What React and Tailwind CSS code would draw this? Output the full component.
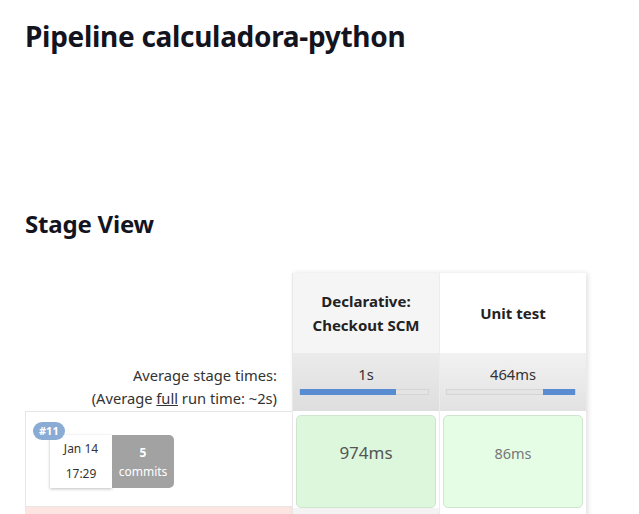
export default function App() {
  const font = { fontFamily: '"Noto Sans", "Open Sans", sans-serif' }
  return (
    <div className="min-h-screen bg-white text-[#14141f]" style={font}>
      <div className="pl-[25px] pt-[17px]">
        <h1 className="text-[28px] font-bold leading-[38px] tracking-[-0.3px]">Pipeline calculadora-python</h1>
        <h2 className="mt-[154px] text-[24px] font-bold leading-[30px] tracking-[-0.2px]">Stage View</h2>

        <div className="mt-[34px] flex">
          {/* left column */}
          <div className="w-[267px] shrink-0">
            <div className="h-[80px]" />
            <div className="flex h-[58px] flex-col items-end justify-center pr-[15px] pt-[9px] text-[14.7px] leading-[23px] text-[#333]">
              <div>Average stage times:</div>
              <div>
                (Average <span className="underline">full</span> run time: ~2s)
              </div>
            </div>
            <div className="relative h-[96px] border-y border-l border-[#e6e6e6] bg-white">
              <div className="absolute left-[7px] top-[10px] z-10 rounded-full bg-[#8aabd3] px-[6px] text-[11px] font-bold leading-[18px] text-white">
                #11
              </div>
              <div className="absolute left-[24px] top-[23px] flex h-[53px]">
                <div className="flex w-[62px] flex-col items-center justify-center gap-[9px] bg-white text-[12px] text-[#333] shadow-[0_1px_3px_rgba(0,0,0,0.25)]">
                  <div className="leading-[16px]">Jan 14</div>
                  <div className="leading-[16px]">17:29</div>
                </div>
                <div className="flex w-[62px] flex-col items-center justify-center rounded-r-[5px] bg-[#a2a2a2] text-[12px] text-white">
                  <div className="font-bold leading-[19px]">5</div>
                  <div className="leading-[19px]">commits</div>
                </div>
              </div>
            </div>
            <div className="h-[20px] bg-[#fde6e2]" />
          </div>

          {/* stage columns */}
          <div className="flex shadow-[2px_0_5px_rgba(0,0,0,0.12)]">
            {[
              { name: ['Declarative:', 'Checkout SCM'], head: 'bg-[#f5f5f5]', avg: '1s', avgBg: 'from-[#ebebeb] to-[#dedede]', fill: [0, 75], cell: '974ms', cellBg: 'bg-[#ddf7dd]', cellText: 'text-[17px] text-[#555]' },
              { name: ['Unit test'], head: 'bg-white', avg: '464ms', avgBg: 'from-[#f2f2f2] to-[#e2e2e2]', fill: [75, 25], cell: '86ms', cellBg: 'bg-[#e5fde5]', cellText: 'text-[14.5px] text-[#777]' },
            ].map((s, i) => (
              <div key={i} className={`w-[147px] ${i === 0 ? 'border-l border-[#e8e8e8]' : 'border-l border-[#ececec]'}`}>
                <div className={`flex h-[80px] flex-col items-center justify-center text-[15px] font-bold leading-[24px] text-[#222] ${s.head}`}>
                  {s.name.map((n) => (
                    <div key={n}>{n}</div>
                  ))}
                </div>
                <div className={`flex h-[58px] flex-col items-center bg-gradient-to-b pt-[12px] ${s.avgBg}`}>
                  <div className="text-[14.7px] leading-[18px] text-[#333]">{s.avg}</div>
                  <div className="relative ml-[6px] mt-[6px] h-[6px] w-[130px] self-start border border-[#d4d4d4] bg-[#e4e4e4]">
                    <div
                      className="absolute top-[-1px] h-[6px] bg-[#5b8bd0]"
                      style={{ left: `${s.fill[0]}%`, width: `${s.fill[1]}%` }}
                    />
                  </div>
                </div>
                <div className="h-[97px] bg-white px-[3px] pt-[4px]">
                  <div className={`flex h-full justify-center rounded-[5px] border border-[#cfe5cf] pt-[25px] ${s.cellBg} ${s.cellText}`}>
                    <div className="leading-[24px]">{s.cell}</div>
                  </div>
                </div>
                <div className={`h-[20px] ${i === 0 ? 'bg-[#f3f3f3]' : 'bg-white'}`} />
              </div>
            ))}
          </div>
        </div>
      </div>
    </div>
  )
}
